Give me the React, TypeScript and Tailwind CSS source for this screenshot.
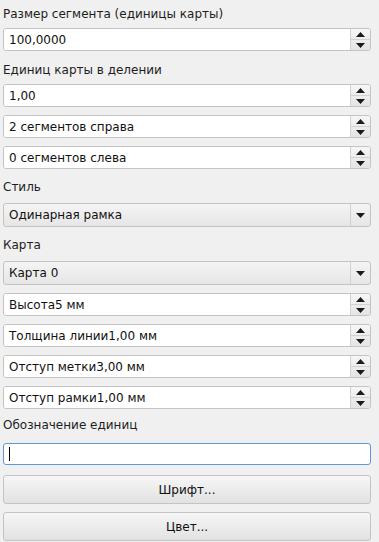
import type { ReactNode } from 'react';

const font = { fontFamily: '"DejaVu Sans", "Noto Sans", sans-serif' };

function Label({ children, pt }: { children: ReactNode; pt: string }) {
  return (
    <div className={pt}>
      <div className="h-[28px] flex items-center pl-[3px] text-[12px] text-[#1e1e1e]">{children}</div>
    </div>
  );
}

function UpArrow() {
  return (
    <svg width="9" height="5" viewBox="0 0 9 5">
      <path d="M0 5 L4.5 0 L9 5 Z" fill="#1a1a1a" />
    </svg>
  );
}

function DownArrow() {
  return (
    <svg width="9" height="5" viewBox="0 0 9 5">
      <path d="M0 0 L9 0 L4.5 5 Z" fill="#1a1a1a" />
    </svg>
  );
}

function SpinBox({ value }: { value: string }) {
  return (
    <div className="ml-[3px] mr-[8px] h-[23px] flex rounded-[3px] border border-[#c4c4c4] overflow-hidden">
      <div className="flex-1 bg-white flex items-center pl-[5px] text-[12px] text-[#111]">{value}</div>
      <div className="w-[20px] flex flex-col border-l border-[#d2d2d2] bg-gradient-to-b from-[#f6f6f6] to-[#e4e4e4]">
        <div className="flex-1 flex items-center justify-center border-b border-[#d2d2d2]">
          <UpArrow />
        </div>
        <div className="flex-1 flex items-center justify-center">
          <DownArrow />
        </div>
      </div>
    </div>
  );
}

function Combo({ value }: { value: string }) {
  return (
    <div className="ml-[3px] mr-[8px] h-[24px] flex rounded-[3px] border border-[#c4c4c4] bg-gradient-to-b from-[#f4f4f4] to-[#e6e6e6] overflow-hidden">
      <div className="flex-1 flex items-center pl-[5px] text-[12px] text-[#111]">{value}</div>
      <div className="w-[20px] flex items-center justify-center border-l border-[#d2d2d2]">
        <DownArrow />
      </div>
    </div>
  );
}

function Button({ children }: { children: ReactNode }) {
  return (
    <div className="ml-[3px] mr-[8px] h-[29px] flex items-center justify-center rounded-[3px] border border-[#c4c4c4] bg-gradient-to-b from-[#f6f6f6] to-[#e2e2e2] text-[12px] text-[#111]">
      {children}
    </div>
  );
}

export default function App() {
  return (
    <div className="w-[379px] h-[542px] overflow-hidden bg-[#f0f0f0]" style={font}>
      <Label pt="pt-0">Размер сегмента (единицы карты)</Label>
      <SpinBox value="100,0000" />
      <Label pt="pt-[5px]">Единиц карты в делении</Label>
      <div className="flex flex-col gap-[8px]">
        <SpinBox value="1,00" />
        <SpinBox value="2 сегментов справа" />
        <SpinBox value="0 сегментов слева" />
      </div>
      <Label pt="pt-[4px]">Стиль</Label>
      <div className="pt-[2px]">
        <Combo value="Одинарная рамка" />
      </div>
      <Label pt="pt-[4px]">Карта</Label>
      <div className="pt-[2px]">
        <Combo value="Карта 0" />
      </div>
      <div className="flex flex-col gap-[8px] pt-[8px]">
        <SpinBox value="Высота5 мм" />
        <SpinBox value="Толщина линии1,00 мм" />
        <SpinBox value="Отступ метки3,00 мм" />
        <SpinBox value="Отступ рамки1,00 мм" />
      </div>
      <Label pt="pt-[2px]">Обозначение единиц</Label>
      <div className="pt-[4px]">
        <div className="ml-[3px] mr-[8px] h-[22px] flex items-center rounded-[3px] border border-[#5b9bd5] bg-white pl-[5px]">
          <div className="w-px h-[14px] bg-black" />
        </div>
      </div>
      <div className="flex flex-col gap-[8px] pt-[10px]">
        <Button>Шрифт...</Button>
        <Button>Цвет...</Button>
      </div>
    </div>
  );
}
